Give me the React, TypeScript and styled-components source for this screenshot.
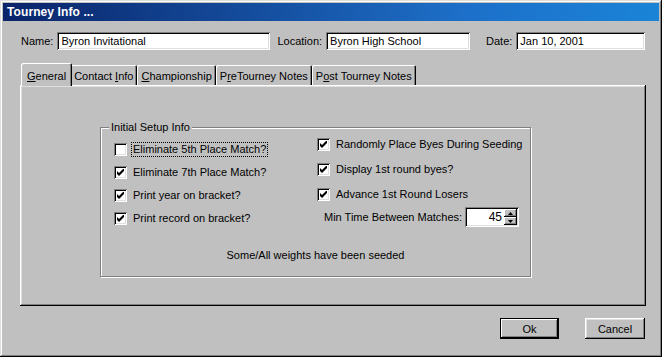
import React from 'react';
import styled, { createGlobalStyle, css } from 'styled-components';

const GlobalStyle = createGlobalStyle`
	html, body {
		margin: 0;
		padding: 0;
		background: #c0c0c0;
	}

	body {
		font-family: 'Liberation Sans', Arial, sans-serif;
		font-size: 11px;
		color: #000;
	}
`;

const raised = css`
	box-shadow: inset -1px -1px #000, inset 1px 1px #fff, inset -2px -2px #808080, inset 2px 2px #dfdfdf;
`;

const sunken = css`
	box-shadow: inset 1px 1px #808080, inset -1px -1px #fff, inset 2px 2px #000, inset -2px -2px #dfdfdf;
`;

const Window = styled.div`
	width: 662px;
	height: 357px;
	box-sizing: border-box;
	padding: 3px;
	background: #c0c0c0;
	box-shadow: inset -1px -1px #000, inset 1px 1px #dfdfdf, inset -2px -2px #808080, inset 2px 2px #fff;
	display: flex;
	flex-direction: column;
`;

const TitleBar = styled.div`
	height: 18px;
	display: flex;
	align-items: center;
	padding-left: 4px;
	background: linear-gradient(to right, #0a246a, #1d6fc8 70%, #1a84d6);
	color: #fff;
	font-weight: bold;
	font-size: 12px;
	letter-spacing: 0.1px;
`;

const Content = styled.div`
	flex: 1;
	display: flex;
	flex-direction: column;
	padding: 0 13px 0 17px;
`;

const FieldRow = styled.div`
	display: flex;
	align-items: center;
	margin-top: 11px;
	height: 18px;
	padding-left: 1px;
`;

const Field = styled.label<{ $offset?: number }>`
	display: flex;
	align-items: center;
	gap: 4px;
	margin-left: ${(p) => p.$offset ?? 0}px;
`;

const TextInput = styled.div<{ $width: number }>`
	width: ${(p) => p.$width}px;
	height: 18px;
	box-sizing: border-box;
	padding: 2px 4px 0;
	background: #fff;
	line-height: 14px;
	white-space: nowrap;
	${sunken};
`;

const TabStrip = styled.div`
	display: flex;
	align-items: flex-end;
	height: 22px;
	margin-top: 14px;
	padding-left: 3px;
	position: relative;
	z-index: 1;
`;

const Tab = styled.div<{ $active?: boolean }>`
	height: ${(p) => (p.$active ? 23 : 20)}px;
	box-sizing: border-box;
	padding: ${(p) => (p.$active ? '2px 6px 0' : '1px 4px 0')};
	margin: ${(p) => (p.$active ? '0 -2px 0 -2px' : '0 0 1px')};
	display: flex;
	align-items: center;
	background: #c0c0c0;
	border-radius: 2px 2px 0 0;
	box-shadow: inset 1px 1px #fff, inset -1px 0 #000, inset -2px 0 #808080;
	position: relative;
	z-index: ${(p) => (p.$active ? 2 : 1)};
	white-space: pre;
`;

const TabLabel = styled.span`
	white-space: pre;
`;

const Key = styled.span`
	text-decoration: underline;
`;

const Panel = styled.div`
	width: 626px;
	height: 221px;
	box-sizing: border-box;
	margin-top: -1px;
	${raised};
	display: flex;
	flex-direction: column;
	align-items: flex-start;
`;

const Group = styled.div`
	position: relative;
	width: 431px;
	height: 150px;
	box-sizing: border-box;
	margin: 42px 0 0 80px;
	border: 1px solid #808080;
	box-shadow: inset 1px 1px #fff, 1px 1px #fff;
	padding: 4px 0 0 13px;
	display: flex;
	flex-direction: column;
`;

const GroupCaption = styled.span`
	position: absolute;
	top: -7px;
	left: 8px;
	padding: 0 2px;
	line-height: 13px;
	background: #c0c0c0;
`;

const Columns = styled.div`
	display: grid;
	grid-template-columns: 203px 1fr;
`;

const Column = styled.div<{ $top: number; $row: number }>`
	display: flex;
	flex-direction: column;
	padding-top: ${(p) => p.$top}px;

	& > * {
		min-height: ${(p) => p.$row}px;
	}
`;

const CheckRow = styled.label`
	display: flex;
	align-items: center;
	gap: 5px;
`;

const Box = styled.span`
	width: 13px;
	height: 13px;
	box-sizing: border-box;
	background: #fff;
	${sunken};
	display: flex;
	align-items: center;
	justify-content: center;
	flex-shrink: 0;
`;

const CheckText = styled.span<{ $focused?: boolean }>`
	padding: 0 1px;
	line-height: 13px;
	outline: ${(p) => (p.$focused ? '1px dotted #000' : 'none')};
	outline-offset: 0;
`;

const SpinRow = styled.div`
	display: flex;
	align-items: center;
	justify-content: space-between;
	padding-left: 7px;
	width: 195px;
	min-height: 20px !important;
`;

const SpinBox = styled.div`
	width: 54px;
	height: 20px;
	box-sizing: border-box;
	padding: 2px;
	background: #fff;
	${sunken};
	display: flex;
	align-items: stretch;
`;

const SpinValue = styled.span`
	flex: 1;
	text-align: right;
	padding-right: 2px;
	font-size: 12px;
	line-height: 16px;
`;

const SpinButtons = styled.div`
	width: 13px;
	display: flex;
	flex-direction: column;
`;

const SpinButton = styled.div`
	flex: 1;
	background: #c0c0c0;
	box-shadow: inset -1px -1px #000, inset 1px 1px #fff, inset -2px -2px #808080;
	display: flex;
	align-items: center;
	justify-content: center;
`;

const Note = styled.div`
	margin-top: 19px;
	margin-left: -13px;
	text-align: center;
	line-height: 13px;
`;

const ButtonRow = styled.div`
	display: flex;
	justify-content: flex-end;
	gap: 26px;
	margin-top: 12px;
	padding-right: 1px;
`;

const Button = styled.button<{ $default?: boolean }>`
	width: ${(p) => (p.$default ? 59 : 60)}px;
	height: 21px;
	padding: 0;
	border: none;
	background: #c0c0c0;
	font: inherit;
	color: #000;
	${(p) =>
		p.$default
			? css`
					box-shadow: inset 0 0 0 1px #000, inset -2px -2px #000, inset 2px 2px #fff, inset -3px -3px #808080;
			  `
			: raised};
`;

const Check = () => (
	<svg width="7" height="7" viewBox="0 0 7 7">
		<path d="M0 2 L2 4 L7 -1 L7 2 L2 7 L0 5 Z" fill="#000" />
	</svg>
);

const Arrow: React.FC<{ up?: boolean }> = ({ up }) => (
	<svg width="5" height="3" viewBox="0 0 5 3">
		<path d={up ? 'M2.5 0 L5 3 L0 3 Z' : 'M0 0 L5 0 L2.5 3 Z'} fill="#000" />
	</svg>
);

const CheckBox: React.FC<{ checked?: boolean; label: string; focused?: boolean }> = ({ checked, label, focused }) => (
	<CheckRow>
		<Box>{checked && <Check />}</Box>
		<CheckText $focused={focused}>{label}</CheckText>
	</CheckRow>
);

export default function App() {
	return (
		<>
			<GlobalStyle />
			<Window>
				<TitleBar>Tourney Info ...</TitleBar>
				<Content>
					<FieldRow>
						<Field>
							Name:
							<TextInput $width={213}>Byron Invitational</TextInput>
						</Field>
						<Field $offset={7}>
							Location:
							<TextInput $width={144}>Byron High School</TextInput>
						</Field>
						<Field $offset={16}>
							Date:
							<TextInput $width={129}>Jan 10, 2001</TextInput>
						</Field>
					</FieldRow>

					<TabStrip>
						<Tab $active>
							<TabLabel>
								<Key>G</Key>eneral
							</TabLabel>
						</Tab>
						<Tab>
							<TabLabel>
								Contact <Key>I</Key>nfo
							</TabLabel>
						</Tab>
						<Tab>
							<TabLabel>
								<Key>C</Key>hampionship
							</TabLabel>
						</Tab>
						<Tab>
							<TabLabel>
								P<Key>r</Key>eTourney Notes
							</TabLabel>
						</Tab>
						<Tab>
							<TabLabel>
								P<Key>o</Key>st Tourney Notes
							</TabLabel>
						</Tab>
					</TabStrip>

					<Panel>
						<Group>
							<GroupCaption>Initial Setup Info</GroupCaption>
							<Columns>
								<Column $top={6} $row={23}>
									<CheckBox label="Eliminate 5th Place Match?" focused />
									<CheckBox checked label="Eliminate 7th Place Match?" />
									<CheckBox checked label="Print year on bracket?" />
									<CheckBox checked label="Print record on bracket?" />
								</Column>
								<Column $top={0} $row={25}>
									<CheckBox checked label="Randomly Place Byes During Seeding" />
									<CheckBox checked label="Display 1st round byes?" />
									<CheckBox checked label="Advance 1st Round Losers" />
									<SpinRow>
										<span>Min Time Between Matches:</span>
										<SpinBox>
											<SpinValue>45</SpinValue>
											<SpinButtons>
												<SpinButton>
													<Arrow up />
												</SpinButton>
												<SpinButton>
													<Arrow />
												</SpinButton>
											</SpinButtons>
										</SpinBox>
									</SpinRow>
								</Column>
							</Columns>
							<Note>Some/All weights have been seeded</Note>
						</Group>
					</Panel>

					<ButtonRow>
						<Button $default>Ok</Button>
						<Button>Cancel</Button>
					</ButtonRow>
				</Content>
			</Window>
		</>
	);
}
